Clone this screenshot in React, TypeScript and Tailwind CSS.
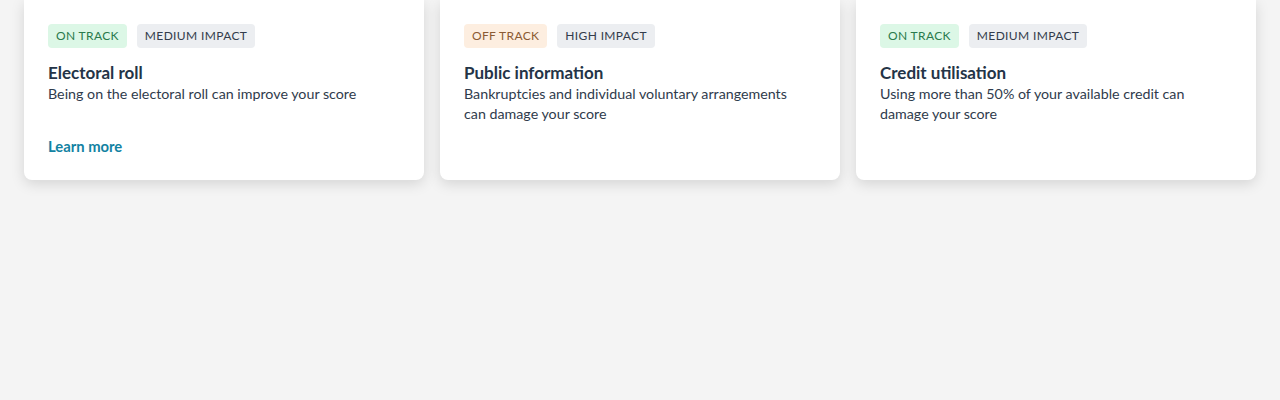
import { ReactNode } from "react";

type Card = {
  status: "on" | "off";
  impact: string;
  title: string;
  text: string;
  link?: boolean;
};

const cards: Card[] = [
  {
    status: "on",
    impact: "Medium impact",
    title: "Electoral roll",
    text: "Being on the electoral roll can improve your score",
    link: true,
  },
  {
    status: "off",
    impact: "High impact",
    title: "Public information",
    text: "Bankruptcies and individual voluntary arrangements can damage your score",
  },
  {
    status: "on",
    impact: "Medium impact",
    title: "Credit utilisation",
    text: "Using more than 50% of your available credit can damage your score",
  },
];

function Badge({ className, children }: { className: string; children: ReactNode }) {
  return (
    <span
      className={
        "inline-flex h-6 items-center rounded px-2 text-[12px] uppercase tracking-[0.03em] " +
        className
      }
    >
      {children}
    </span>
  );
}

export default function App() {
  return (
    <div
      className="min-h-[400px] bg-[#f4f4f4] px-6"
      style={{ fontFamily: "Lato, 'Open Sans', sans-serif" }}
    >
      <div className="grid grid-cols-3 gap-4">
        {cards.map((c) => (
          <div
            key={c.title}
            className="flex flex-col rounded-b-lg bg-white p-6 pr-7 shadow-[0_4px_14px_rgba(0,0,0,0.13)]"
          >
            <div className="flex gap-2.5">
              {c.status === "on" ? (
                <Badge className="bg-[#dcf7e6] text-[#2a7a4c]">On track</Badge>
              ) : (
                <Badge className="bg-[#fdeee0] text-[#8b5a33]">Off track</Badge>
              )}
              <Badge className="bg-[#eceef1] text-[#333c4b]">{c.impact}</Badge>
            </div>
            <h3 className="mt-4 text-[17px] font-bold leading-[18px] text-[#243447]">{c.title}</h3>
            <p className="mt-0.5 text-[14.25px] leading-5 text-[#2f3b4c]">{c.text}</p>
            {c.link && (
              <a className="mt-8 text-[14.8px] font-bold leading-5 text-[#1282a2]" href="#">
                Learn more
              </a>
            )}
          </div>
        ))}
      </div>
    </div>
  );
}
